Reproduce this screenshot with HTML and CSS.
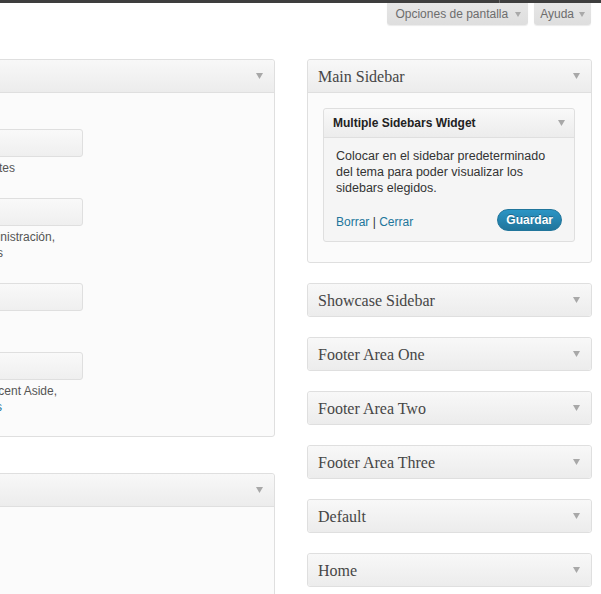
FILE: index.html
```html
<!DOCTYPE html>
<html lang="es">
<head>
<meta charset="utf-8">
<title>Widgets</title>
<link rel="stylesheet" href="styles.css">
</head>
<body>
<div class="adminbar"><div class="ab-left"></div><div class="ab-right"></div></div>
<div class="screen-meta">
  <div class="tab">Opciones de pantalla <svg class="tarr" viewBox="0 0 6 5"><polygon points="0,0 6,0 3,5"/></svg></div>
  <div class="tab tab-help">Ayuda <svg class="tarr" viewBox="0 0 6 5"><polygon points="0,0 6,0 3,5"/></svg></div>
</div>
<div class="cols">
  <div class="col-left">
    <div class="panel">
      <div class="panel-head"><span></span><svg class="arr" viewBox="0 0 7 6"><polygon points="0,0 7,0 3.5,6"/></svg></div>
      <div class="left-body">
        <div class="lw">
          <div class="wbox"></div>
          <div class="desc"><div class="dl e182">Los comentarios más recientes</div></div>
        </div>
        <div class="lw">
          <div class="wbox"></div>
          <div class="desc">
            <div class="dl e222">Enlaces de acceso/salida, administración,</div>
            <div class="dl e170">feed y enlaces de WordPress</div>
          </div>
        </div>
        <div class="lw">
          <div class="wbox"></div>
          <div class="desc"><div class="dl e150">&nbsp;</div></div>
        </div>
        <div class="lw">
          <div class="wbox"></div>
          <div class="desc">
            <div class="dl e224">Usa este widget para listar tus entradas Recent Aside,</div>
            <div class="dl e169">Quote, Video, Audio, Image, Gallery y <span class="lnk">Links</span></div>
          </div>
        </div>
      </div>
    </div>
    <div class="panel panel-2">
      <div class="panel-head"><span></span><svg class="arr" viewBox="0 0 7 6"><polygon points="0,0 7,0 3.5,6"/></svg></div>
      <div class="left-body-2"></div>
    </div>
  </div>
  <div class="col-right">
    <div class="panel">
      <div class="panel-head"><span>Main Sidebar</span><svg class="arr" viewBox="0 0 7 6"><polygon points="0,0 7,0 3.5,6"/></svg></div>
      <div class="main-body">
        <div class="widget">
          <div class="widget-head"><span>Multiple Sidebars Widget</span><svg class="arr" viewBox="0 0 7 6"><polygon points="0,0 7,0 3.5,6"/></svg></div>
          <div class="widget-body">
            <p class="wtext">Colocar en el sidebar predeterminado del tema para poder visualizar los sidebars elegidos.</p>
            <div class="actions">
              <div class="links"><a href="#">Borrar</a> | <a href="#">Cerrar</a></div>
              <button class="btn">Guardar</button>
            </div>
          </div>
        </div>
      </div>
    </div>
    <div class="panel collapsed"><div class="panel-head"><span>Showcase Sidebar</span><svg class="arr" viewBox="0 0 7 6"><polygon points="0,0 7,0 3.5,6"/></svg></div></div>
    <div class="panel collapsed"><div class="panel-head"><span>Footer Area One</span><svg class="arr" viewBox="0 0 7 6"><polygon points="0,0 7,0 3.5,6"/></svg></div></div>
    <div class="panel collapsed"><div class="panel-head"><span>Footer Area Two</span><svg class="arr" viewBox="0 0 7 6"><polygon points="0,0 7,0 3.5,6"/></svg></div></div>
    <div class="panel collapsed"><div class="panel-head"><span>Footer Area Three</span><svg class="arr" viewBox="0 0 7 6"><polygon points="0,0 7,0 3.5,6"/></svg></div></div>
    <div class="panel collapsed"><div class="panel-head"><span>Default</span><svg class="arr" viewBox="0 0 7 6"><polygon points="0,0 7,0 3.5,6"/></svg></div></div>
    <div class="panel collapsed"><div class="panel-head"><span>Home</span><svg class="arr" viewBox="0 0 7 6"><polygon points="0,0 7,0 3.5,6"/></svg></div></div>
  </div>
</div>
</body>
</html>
```
FILE: styles.css
```css
html, body {
  margin: 0;
  padding: 0;
  background: #ffffff;
  overflow: hidden;
  height: 594px;
}
body {
  font-family: "Liberation Sans", Arial, sans-serif;
  color: #333;
}
.adminbar {
  display: flex;
  height: 3px;
  background: #3e3e3e;
}
.ab-left {
  width: 499px;
  flex: none;
}
.ab-right {
  flex: 1;
  border-left: 1px solid #6a6a6a;
}
.screen-meta {
  display: flex;
  justify-content: flex-end;
  gap: 6px;
  padding-right: 10px;
}
.tab {
  height: 22px;
  display: flex;
  align-items: center;
  padding: 0 7px 0 8px;
  background: linear-gradient(#e6e6e6, #dedede);
  border-radius: 0 0 3px 3px;
  box-shadow: 0 1px 1px rgba(0,0,0,0.08);
  font-size: 12px;
  color: #6d6d6d;
}
.tab-help {
  padding: 0 6px 0 6px;
}
.tarr {
  width: 6px;
  height: 5px;
  margin-left: 7px;
  fill: #a9a9a9;
}
.tab-help .tarr {
  margin-left: 5px;
}
.cols {
  display: flex;
  gap: 32px;
  margin-top: 34px;
}
.col-left {
  width: 501px;
  margin-left: -226px;
  flex: none;
}
.col-right {
  width: 285px;
  flex: none;
}
.panel {
  border: 1px solid #dfdfdf;
  border-radius: 3px;
  background: #fbfbfb;
  margin-bottom: 20px;
}
.panel-head {
  height: 32px;
  display: flex;
  align-items: center;
  justify-content: space-between;
  padding: 0 11px 0 10px;
  background: linear-gradient(#f8f8f8, #ececec);
  border-bottom: 1px solid #dfdfdf;
  border-radius: 3px 3px 0 0;
  font-family: "Liberation Serif", Georgia, serif;
  font-size: 16px;
  color: #464646;
}
.panel-head span {
  padding-top: 1px;
}
.collapsed .panel-head {
  border-bottom: none;
  border-radius: 3px;
}
.arr {
  width: 7px;
  height: 6px;
  fill: #a8a8a8;
  flex: none;
}
.left-body {
  padding: 36px 0 21px 58px;
}
.lw + .lw {
  margin-top: 22px;
}
.lw {
  width: 250px;
}
.wbox {
  height: 26px;
  border: 1px solid #dfdfdf;
  border-radius: 3px;
  background: linear-gradient(#f9f9f9, #efefef);
}
.desc {
  margin-top: 3px;
  font-size: 12px;
  line-height: 16px;
  color: #555;
}
.dl {
  display: flex;
  justify-content: flex-end;
  white-space: nowrap;
}
.e182 { width: 182px; }
.e222 { width: 222px; }
.e170 { width: 170px; }
.e150 { width: 150px; }
.e224 { width: 224px; }
.e169 { width: 169px; }
.lnk { color: #21759b; margin-left: 3px; }
.panel-2 {
  margin-top: 36px;
}
.left-body-2 {
  height: 200px;
}
.main-body {
  padding: 15px 16px 20px 15px;
}
.widget {
  border: 1px solid #dfdfdf;
  border-radius: 3px;
  background: #f5f5f5;
}
.widget-head {
  height: 28px;
  display: flex;
  align-items: center;
  justify-content: space-between;
  padding: 0 9px 0 9px;
  background: linear-gradient(#f9f9f9, #ececec);
  border-bottom: 1px solid #dfdfdf;
  border-radius: 3px 3px 0 0;
  font-size: 12px;
  font-weight: bold;
  color: #222;
}
.widget-body {
  padding: 10px 12px 10px 12px;
}
.wtext {
  margin: 0;
  font-size: 12.5px;
  line-height: 16px;
  color: #333;
}
.actions {
  margin-top: 13px;
  height: 22px;
  display: flex;
  align-items: center;
  justify-content: space-between;
}
.links {
  font-size: 12px;
  color: #333;
  padding-top: 3px;
}
.links a {
  color: #21759b;
  text-decoration: none;
}
.btn {
  height: 22px;
  padding: 0 8px;
  border: 1px solid #21759b;
  border-radius: 11px;
  background: linear-gradient(#2a95c5, #21759b);
  color: #fff;
  font-family: "Liberation Sans", Arial, sans-serif;
  font-size: 12px;
  font-weight: bold;
  text-shadow: 0 -1px 0 rgba(0,0,0,0.3);
}
```
